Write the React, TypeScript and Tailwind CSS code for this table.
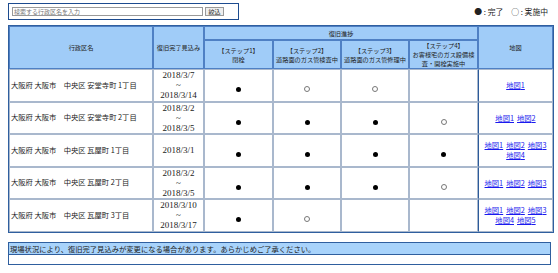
import React from 'react'

type Row = {
  name: string
  dates: string[]
  steps: string[]
  maps: number[][]
}

const rows: Row[] = [
  { name: '大阪府 大阪市　中央区 安堂寺町 1丁目', dates: ['2018/3/7', '~', '2018/3/14'], steps: ['●', '○', '○', ''], maps: [[1]] },
  { name: '大阪府 大阪市　中央区 安堂寺町 2丁目', dates: ['2018/3/2', '~', '2018/3/5'], steps: ['●', '●', '●', '○'], maps: [[1, 2]] },
  { name: '大阪府 大阪市　中央区 瓦屋町 1丁目', dates: ['2018/3/1'], steps: ['●', '●', '●', '●'], maps: [[1, 2, 3], [4]] },
  { name: '大阪府 大阪市　中央区 瓦屋町 2丁目', dates: ['2018/3/2', '~', '2018/3/5'], steps: ['●', '●', '●', '○'], maps: [[1, 2, 3]] },
  { name: '大阪府 大阪市　中央区 瓦屋町 3丁目', dates: ['2018/3/10', '~', '2018/3/17'], steps: ['●', '○', '', ''], maps: [[1, 2, 3], [4, 5]] },
]

const steps = [
  ['【ステップ1】', '閉栓'],
  ['【ステップ2】', '道路面のガス管検査中'],
  ['【ステップ3】', '道路面のガス管修理中'],
  ['【ステップ4】', 'お客様宅のガス設備検査・開栓実施中'],
]

function Mark({ v }: { v: string }) {
  if (v === '●') return <span className="inline-block w-[5px] h-[5px] rounded-full bg-black" />
  if (v === '○') return <span className="inline-block w-[6px] h-[6px] rounded-full border border-[#777]" />
  return null
}

const th = 'border border-[#4f80c4] bg-[#a0ccf8] text-[6.2px] leading-[9px] font-normal text-[#222] text-center p-0'
const td = 'border border-[#a9b8cd] p-0 text-center'

export default function App() {
  return (
    <div className="w-[558px] h-[273px] bg-white text-[#222] font-['Noto_Sans_CJK_JP',sans-serif] overflow-hidden">
      <div className="flex items-start justify-between pl-[8px] pr-[10px] pt-[3px]">
        <div className="flex items-center gap-[2px] w-[231px] h-[17px] border border-[#1d4b8f] pl-[3px]">
          <div className="w-[191px] h-[9px] border border-[#999] bg-white text-[6px] leading-[7px] text-[#777] pl-[1px]">
            検索する行政区名を入力
          </div>
          <div className="w-[19px] h-[9px] border border-[#999] bg-[#eee] text-[6px] leading-[7px] text-center">絞込</div>
        </div>
        <div className="text-[7.8px] leading-[9px] mt-[4px] whitespace-pre">● : 完了　○ : 実施中</div>
      </div>

      <table className="ml-[8px] mt-[5px] w-[544px] table-fixed border-separate border-spacing-0 border border-[#2f5f9f]">
        <colgroup>
          <col className="w-[144px]" />
          <col className="w-[51px]" />
          <col className="w-[69px]" />
          <col className="w-[68px]" />
          <col className="w-[68px]" />
          <col className="w-[69px]" />
          <col className="w-[75px]" />
        </colgroup>
        <thead>
          <tr className="h-[14px]">
            <th rowSpan={2} className={th}>行政区名</th>
            <th rowSpan={2} className={th}>復旧完了見込み</th>
            <th colSpan={4} className={th}>復旧進捗</th>
            <th rowSpan={2} className={th}>地図</th>
          </tr>
          <tr className="h-[29px]">
            {steps.map(([a, b]) => (
              <th key={a} className={th + ' px-[2px]'}>
                <div>{a}</div>
                <div>{b}</div>
              </th>
            ))}
          </tr>
        </thead>
        <tbody>
          {rows.map((r) => (
            <tr key={r.name} className="h-[32.5px]">
              <td className="border border-[#a9b8cd] p-0 pl-[1px] text-left text-[7.3px] leading-[9px] whitespace-pre">{r.name}</td>
              <td className={td + " font-['Liberation_Serif',serif] text-[9px] leading-[10px]"}>
                {r.dates.map((d, i) => (
                  <div key={i}>{d}</div>
                ))}
              </td>
              {r.steps.map((s, i) => (
                <td key={i} className={td}>
                  <Mark v={s} />
                </td>
              ))}
              <td className="border border-[#a9b8cd] border-l-[#2c5b9b] p-0 text-center text-[7.3px] leading-[10px]">
                {r.maps.map((line, i) => (
                  <div key={i}>
                    {line.map((n, j) => (
                      <a key={n} href="#" className={'text-[#1a1aee] underline' + (j > 0 ? ' ml-[3px]' : '')}>
                        地図{n}
                      </a>
                    ))}
                  </div>
                ))}
              </td>
            </tr>
          ))}
        </tbody>
      </table>

      <div className="ml-[8px] mt-[9px] w-[543px] border border-[#2f5f9f]">
        <div className="h-[12px] bg-[#a8d3fb] border-b border-[#2f5f9f] text-[7.3px] leading-[12px] pl-[1px]">
          現場状況により、復旧完了見込みが変更になる場合があります。あらかじめご了承ください。
        </div>
        <div className="h-[9px]" />
      </div>
    </div>
  )
}
